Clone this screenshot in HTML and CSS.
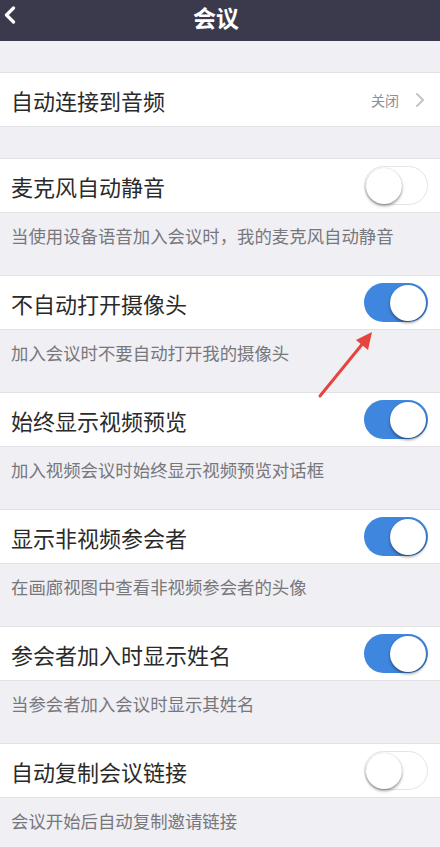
FILE: index.html
```html
<!DOCTYPE html>
<html lang="zh-CN">
<head>
<meta charset="utf-8">
<link rel="stylesheet" href="styles.css">
</head>
<body>
<div class="page">
  <header class="nav">
    <svg class="back" width="14" height="18" viewBox="0 0 14 18"><path d="M10.5 2 L3.5 9 L10.5 16" fill="none" stroke="#fff" stroke-width="3.2" stroke-linecap="round" stroke-linejoin="round"/></svg>
    <div class="title">会议</div>
  </header>

  <div class="gap-top"></div>
  <div class="row">
    <span class="label">自动连接到音频</span>
    <span class="value">关闭</span>
    <svg class="chev" width="10" height="16" viewBox="0 0 10 16"><path d="M2 2 L8 8 L2 14" fill="none" stroke="#c4c4c9" stroke-width="2" stroke-linecap="round" stroke-linejoin="round"/></svg>
  </div>
  <div class="gap-mid"></div>

  <div class="row">
    <span class="label">麦克风自动静音</span>
    <span class="toggle off"><span class="knob"></span></span>
  </div>
  <div class="desc">当使用设备语音加入会议时，我的麦克风自动静音</div>

  <div class="row">
    <span class="label">不自动打开摄像头</span>
    <span class="toggle on"><span class="knob"></span></span>
  </div>
  <div class="desc">加入会议时不要自动打开我的摄像头</div>

  <div class="row">
    <span class="label">始终显示视频预览</span>
    <span class="toggle on"><span class="knob"></span></span>
  </div>
  <div class="desc">加入视频会议时始终显示视频预览对话框</div>

  <div class="row">
    <span class="label">显示非视频参会者</span>
    <span class="toggle on"><span class="knob"></span></span>
  </div>
  <div class="desc">在画廊视图中查看非视频参会者的头像</div>

  <div class="row">
    <span class="label">参会者加入时显示姓名</span>
    <span class="toggle on"><span class="knob"></span></span>
  </div>
  <div class="desc">当参会者加入会议时显示其姓名</div>

  <div class="row">
    <span class="label">自动复制会议链接</span>
    <span class="toggle off"><span class="knob"></span></span>
  </div>
  <div class="desc">会议开始后自动复制邀请链接</div>

  <svg class="arrow" width="440" height="847" viewBox="0 0 440 847">
    <line x1="320" y1="396" x2="364" y2="342" stroke="#e5443f" stroke-width="3" stroke-linecap="round"/>
    <polygon points="372,332 368,350 356,340" fill="#e5443f"/>
  </svg>
</div>
</body>
</html>
```

FILE: styles.css
```css
html, body {
  margin: 0;
  padding: 0;
}
body {
  background: #efeff4;
  font-family: "Noto Sans CJK SC", "Noto Sans", sans-serif;
  width: 440px;
  height: 847px;
  overflow: hidden;
}
.page {
  position: relative;
  width: 440px;
  height: 847px;
}
.nav {
  height: 41px;
  background: #3a3a4c;
  display: flex;
  align-items: flex-start;
  justify-content: center;
  position: relative;
}
.back {
  position: absolute;
  left: 3px;
  top: 6px;
}
.title {
  color: #fff;
  font-size: 23px;
  font-weight: bold;
  line-height: 32px;
  margin-top: 1px;
  margin-right: 8px;
}
.gap-top {
  height: 31px;
}
.gap-mid {
  height: 31px;
}
.row {
  height: 55px;
  box-sizing: border-box;
  background: #fff;
  border-top: 1px solid #e2e2e6;
  border-bottom: 1px solid #e2e2e6;
  display: flex;
  align-items: center;
  padding: 0 12px 0 11px;
}
.label {
  flex: 1;
  font-size: 22px;
  color: #2a2a2a;
  line-height: 26px;
}
.value {
  font-size: 14px;
  color: #8e8e93;
  margin-right: 16px;
}
.chev {
  margin-right: 3px;
}
.desc {
  height: 62px;
  box-sizing: border-box;
  padding: 13px 0 0 11px;
  font-size: 17.4px;
  line-height: 20px;
  color: #77777c;
}
.toggle {
  width: 64px;
  height: 39px;
  border-radius: 20px;
  box-sizing: border-box;
  display: flex;
  align-items: center;
  padding: 0 2px;
}
.toggle.on {
  background: #3f86de;
  justify-content: flex-end;
}
.toggle.off {
  background: #fff;
  border: 1.5px solid #e4e4e6;
  justify-content: flex-start;
  padding: 0 1px;
}
.knob {
  width: 36px;
  height: 36px;
  border-radius: 50%;
  background: #fff;
  box-shadow: 0 2px 3px rgba(0, 0, 0, 0.38), 0 0 1px rgba(0, 0, 0, 0.25);
}
.arrow {
  position: absolute;
  left: 0;
  top: 0;
  pointer-events: none;
}
```
